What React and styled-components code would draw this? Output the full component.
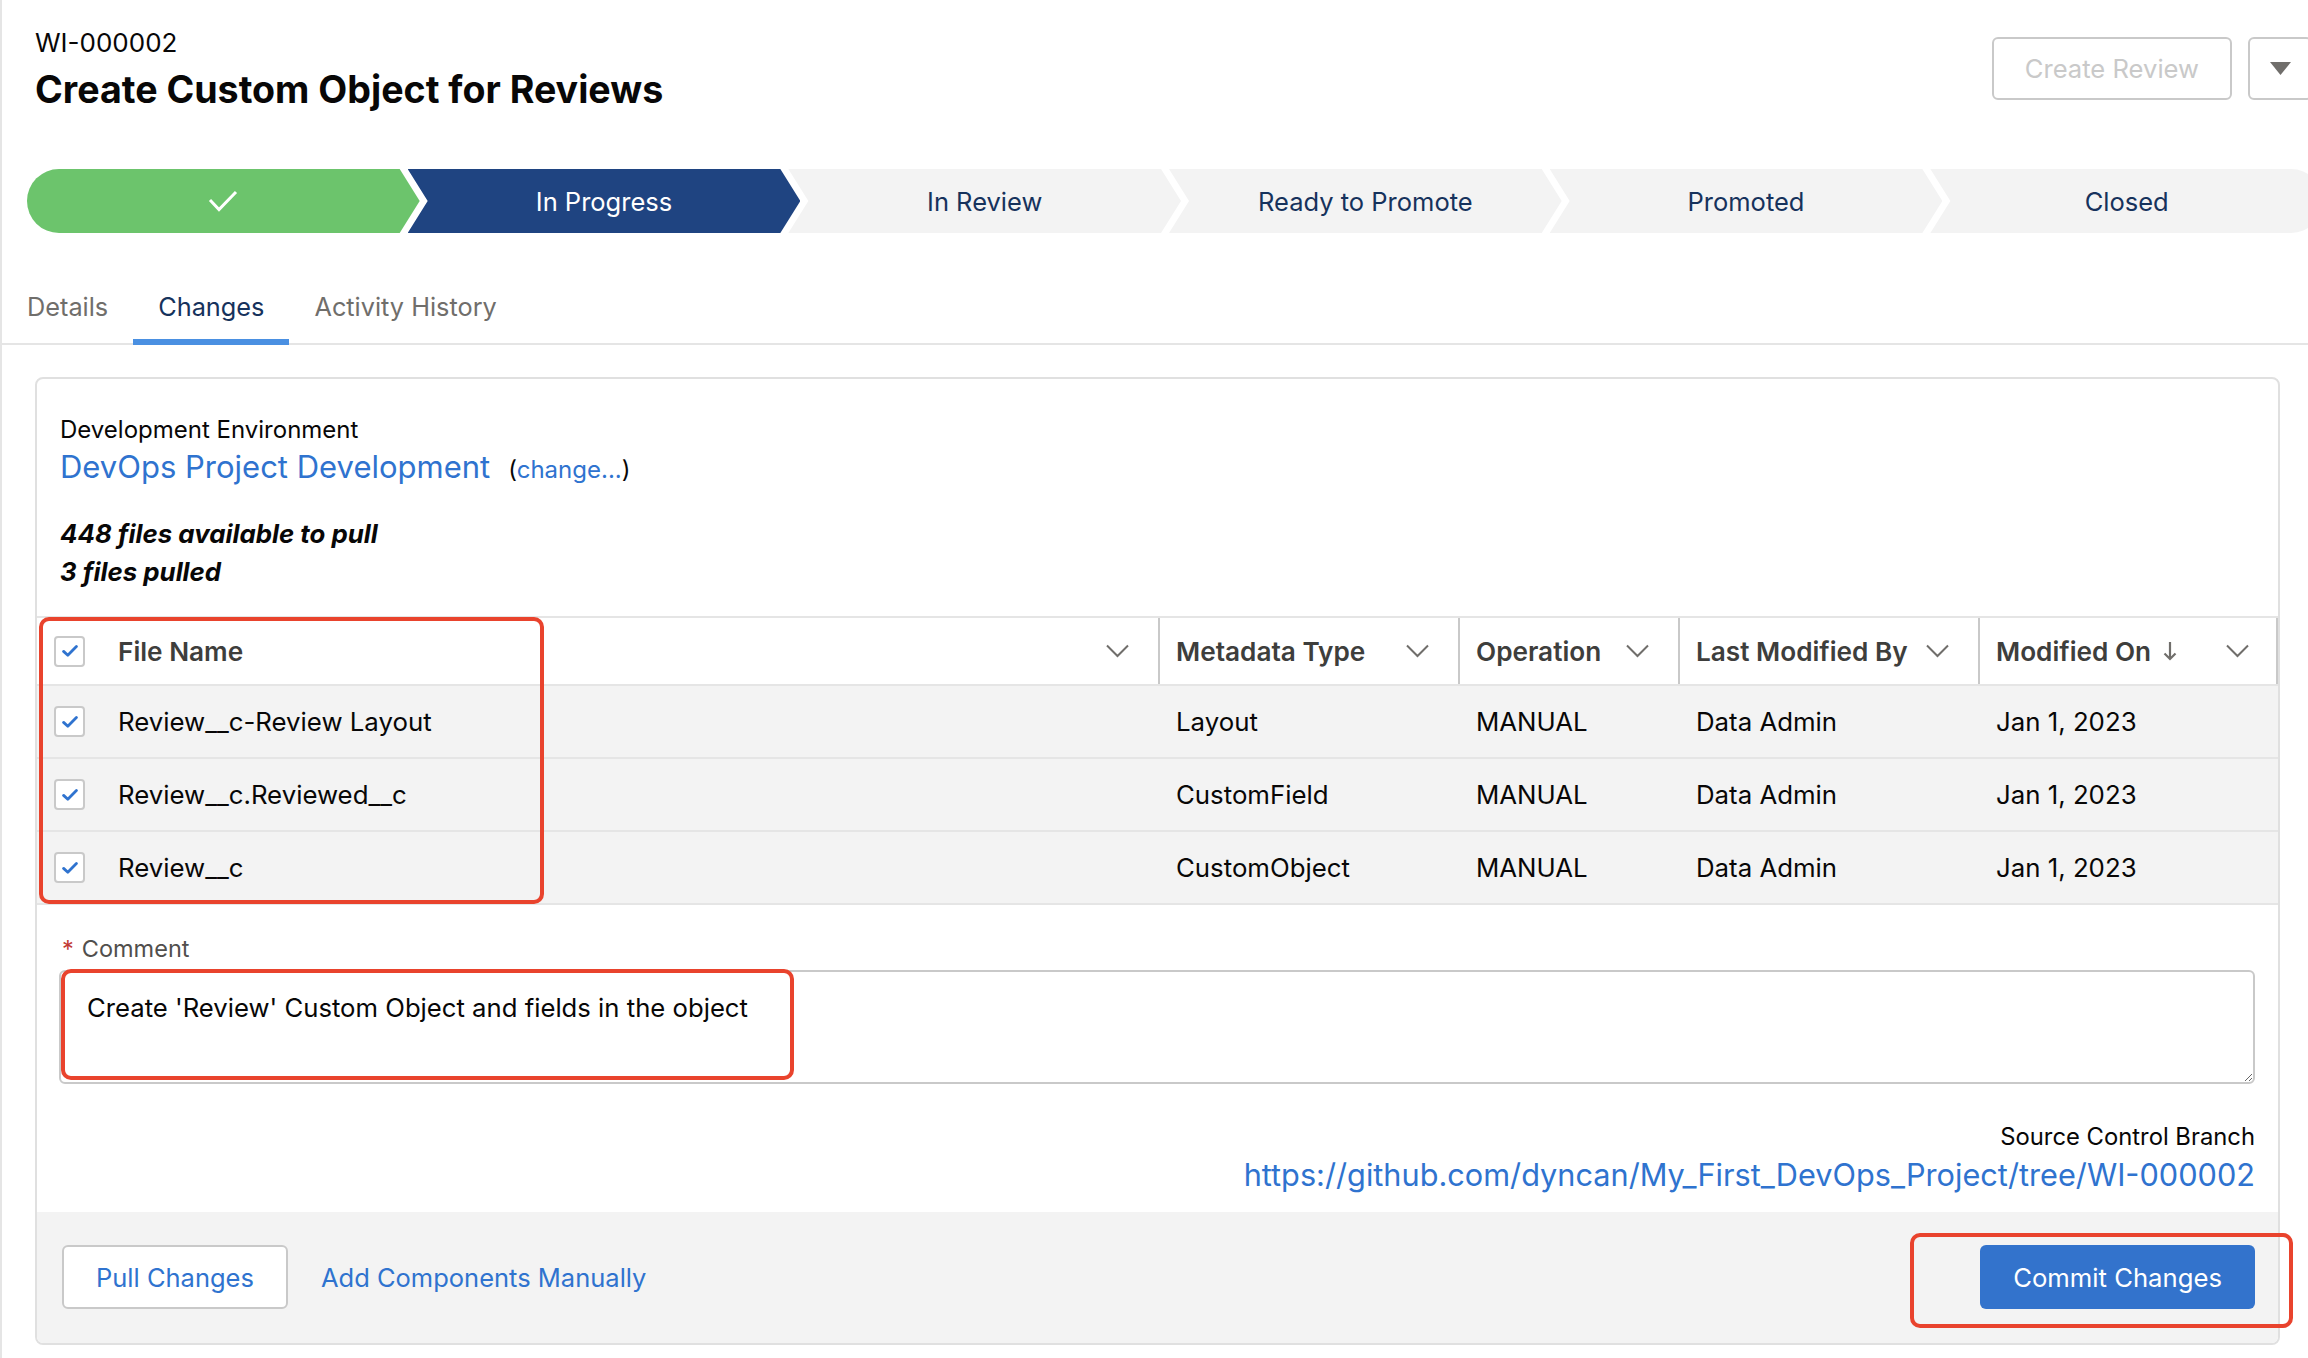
import React from "react";
import styled, { createGlobalStyle } from "styled-components";

const GlobalStyle = createGlobalStyle`
  *, *::before, *::after { box-sizing: border-box; }
  html, body { margin: 0; padding: 0; background: #fff; overflow: hidden; }
  body { font-family: Inter, "Liberation Sans", Arial, sans-serif; color: #080707; }
`;

const FONT = `Inter, "Liberation Sans", Arial, sans-serif`;

const Page = styled.div`
  position: relative;
  width: 2356px;
  min-height: 1358px;
  border-left: 2px solid #e5e5e5;
  font-family: ${FONT};
`;

const Header = styled.header`
  display: flex;
  justify-content: space-between;
  align-items: flex-start;
  padding: 26px 44px 0 33px;
`;

const TitleBlock = styled.div`
  display: flex;
  flex-direction: column;
`;

const RecordId = styled.div`
  font-size: 26px;
  line-height: 34px;
  color: #080707;
`;

const Title = styled.h1`
  margin: 6px 0 0;
  font-size: 37.6px;
  line-height: 48px;
  font-weight: 700;
  color: #080707;
`;

const Actions = styled.div`
  display: flex;
  gap: 16px;
  margin-top: 11px;
`;

const OutlineButton = styled.button`
  height: 63px;
  padding: 0 31px;
  border: 2px solid #c9c9c9;
  border-radius: 6px;
  background: #fff;
  color: ${p => (p.$muted ? "#c9c9c9" : "#2f73cf")};
  font-family: ${FONT};
  font-size: 25.6px;
  cursor: pointer;
`;

const MenuButton = styled.button`
  width: 64px;
  height: 63px;
  border: 2px solid #c9c9c9;
  border-radius: 6px;
  background: #fff;
  display: flex;
  align-items: center;
  justify-content: center;
  padding: 0;
`;

const PathBar = styled.div`
  display: flex;
  width: 2296px;
  height: 64px;
  margin: 55px 0 0 25px;
  border-radius: 32px;
  overflow: hidden;
`;

const stageBg = { complete: "#6cc46c", current: "#1f4481", incomplete: "#f3f3f3" };

const Stage = styled.div`
  flex: 1 1 0;
  height: 64px;
  margin-left: -12px;
  display: flex;
  align-items: center;
  justify-content: center;
  background: ${p => stageBg[p.$state]};
  color: ${p => (p.$state === "current" ? "#ffffff" : "#16325c")};
  font-size: 25.5px;
  clip-path: polygon(0 0, calc(100% - 20px) 0, 100% 50%, calc(100% - 20px) 100%, 0 100%, 20px 50%);
  &:first-child {
    margin-left: 0;
    clip-path: polygon(0 0, calc(100% - 20px) 0, 100% 50%, calc(100% - 20px) 100%, 0 100%);
  }
  &:last-child {
    clip-path: polygon(0 0, 100% 0, 100% 100%, 0 100%, 20px 50%);
  }
`;

const TabBar = styled.nav`
  display: flex;
  margin-top: 40px;
  border-bottom: 2px solid #e5e5e5;
`;

const Tab = styled.div`
  height: 72px;
  margin-bottom: -2px;
  padding: 0 25px;
  display: flex;
  align-items: center;
  font-size: 25.3px;
  color: ${p => (p.$active ? "#16325c" : "#706e6b")};
  border-bottom: 6px solid ${p => (p.$active ? "#4a90e2" : "transparent")};
`;

const Card = styled.section`
  margin: 32px 0 0 33px;
  width: 2245px;
  border: 2px solid #e0e0e0;
  border-radius: 8px;
  overflow: hidden;
  background: #fff;
`;

const EnvSection = styled.div`
  padding: 36px 24px 25px 23px;
`;

const EnvLabel = styled.div`
  font-size: 24px;
  line-height: 30px;
  color: #080707;
`;

const EnvLine = styled.div`
  display: flex;
  align-items: baseline;
  gap: 18px;
  margin-top: 3px;
  line-height: 38px;
`;

const EnvLink = styled.a`
  font-size: 31px;
  color: #2f73cf;
  text-decoration: none;
`;

const ChangeNote = styled.span`
  font-size: 24px;
  color: #080707;
`;

const InlineLink = styled.a`
  color: #2f73cf;
  text-decoration: none;
`;

const Stats = styled.div`
  margin-top: 26px;
  font-size: 25.8px;
  line-height: 38px;
  font-weight: 700;
  font-style: italic;
  color: #080707;
`;

const GRID = "1121px 300px 220px 300px 1fr";

const HeaderRow = styled.div`
  display: grid;
  grid-template-columns: ${GRID};
  height: 70px;
  border-top: 2px solid #e5e5e5;
  border-bottom: 2px solid #e5e5e5;
  background: #fff;
`;

const DataRow = styled.div`
  display: grid;
  grid-template-columns: ${GRID};
  height: 73px;
  border-bottom: 2px solid #e5e5e5;
  background: #f3f3f3;
`;

const HeadCell = styled.div`
  display: flex;
  align-items: center;
  padding: 0 27px 0 ${p => (p.$first ? "15px" : "16px")};
  border-left: 2px solid ${p => (p.$first ? "transparent" : "#c9c9c9")};
  border-right: 2px solid ${p => (p.$last ? "#c9c9c9" : "transparent")};
  font-size: 26.2px;
  font-weight: 600;
  color: #3e3e3c;
`;

const Cell = styled.div`
  display: flex;
  align-items: center;
  padding: 0 16px 0 ${p => (p.$first ? "15px" : "16px")};
  border-left: 2px solid transparent;
  font-size: 25.8px;
  color: #080707;
`;

const HeadLabel = styled.span`
  flex: 1;
  display: flex;
  align-items: center;
  gap: 12px;
`;

const CheckWrap = styled.span`
  width: 31px;
  height: 31px;
  margin-right: 33px;
  flex: none;
  border: 2px solid #c9c9c9;
  border-radius: 4px;
  background: #fff;
  display: flex;
  align-items: center;
  justify-content: center;
`;

const CommentSection = styled.div`
  padding: 30px 23px 0 22px;
`;

const FieldLabel = styled.label`
  display: block;
  font-size: 23.5px;
  line-height: 28px;
  color: #514f4d;
  margin-left: 3px;
`;

const Required = styled.abbr`
  color: #c23934;
  text-decoration: none;
  margin-right: 8px;
`;

const CommentBox = styled.textarea`
  display: block;
  width: 100%;
  height: 114px;
  margin-top: 7px;
  padding: 20px 26px;
  border: 2px solid #c9c9c9;
  border-radius: 6px;
  font-family: ${FONT};
  font-size: 25.7px;
  line-height: 32px;
  color: #080707;
  resize: vertical;
  outline: none;
`;

const BranchSection = styled.div`
  padding: 38px 23px 17px;
  text-align: right;
`;

const BranchLabel = styled.div`
  font-size: 23.8px;
  line-height: 30px;
  color: #080707;
`;

const BranchLink = styled.a`
  display: block;
  margin-top: 3px;
  font-size: 30.7px;
  line-height: 40px;
  color: #2f73cf;
  text-decoration: none;
`;

const Footer = styled.footer`
  display: flex;
  align-items: center;
  padding: 33px 23px 34px 25px;
  background: #f3f3f3;
`;

const NeutralButton = styled.button`
  height: 64px;
  padding: 0 32px;
  border: 2px solid #c9c9c9;
  border-radius: 6px;
  background: #fff;
  color: #2f73cf;
  font-family: ${FONT};
  font-size: 25.5px;
`;

const TextButton = styled.a`
  margin-left: 33px;
  font-size: 25.5px;
  color: #2f73cf;
  text-decoration: none;
`;

const BrandButton = styled.button`
  margin-left: auto;
  height: 64px;
  padding: 0 33px;
  border: none;
  border-radius: 6px;
  background: #3373cc;
  color: #fff;
  font-family: ${FONT};
  font-size: 25.7px;
`;

const Annotation = styled.div`
  position: absolute;
  left: ${p => p.$x}px;
  top: ${p => p.$y}px;
  width: ${p => p.$w}px;
  height: ${p => p.$h}px;
  border: 4px solid #e9432d;
  border-radius: 10px;
  pointer-events: none;
`;

const CheckIcon = () => (
  <svg width="16" height="12" viewBox="0 0 16 12" aria-hidden="true">
    <path d="M1.6 6.4 L5.8 10.2 L14.4 1.6" fill="none" stroke="#2f73cf" strokeWidth="2.8" strokeLinecap="round" strokeLinejoin="round" />
  </svg>
);

const Checkbox = () => (
  <CheckWrap>
    <CheckIcon />
  </CheckWrap>
);

const Chevron = () => (
  <svg width="23" height="14" viewBox="0 0 23 14" aria-hidden="true">
    <polyline points="1,1.5 11.5,12 22,1.5" fill="none" stroke="#706e6b" strokeWidth="2" />
  </svg>
);

const SortArrow = () => (
  <svg width="14" height="20" viewBox="0 0 14 20" aria-hidden="true">
    <path d="M7 1 V18 M1.5 12.5 L7 18 L12.5 12.5" fill="none" stroke="#706e6b" strokeWidth="2.2" />
  </svg>
);

const Triangle = () => (
  <svg width="21" height="13" viewBox="0 0 21 13" aria-hidden="true">
    <polygon points="0,0 21,0 10.5,13" fill="#706e6b" />
  </svg>
);

const DoneCheck = () => (
  <svg width="30" height="22" viewBox="0 0 30 22" aria-hidden="true">
    <path d="M2 10 L11 19.5 L28 2" fill="none" stroke="#fff" strokeWidth="3" />
  </svg>
);

const stages = [
  { key: "done", state: "complete" },
  { key: "In Progress", state: "current" },
  { key: "In Review", state: "incomplete" },
  { key: "Ready to Promote", state: "incomplete" },
  { key: "Promoted", state: "incomplete" },
  { key: "Closed", state: "incomplete" },
];

const columns = ["Metadata Type", "Operation", "Last Modified By", "Modified On"];

const rows = [
  ["Review__c-Review Layout", "Layout", "MANUAL", "Data Admin", "Jan 1, 2023"],
  ["Review__c.Reviewed__c", "CustomField", "MANUAL", "Data Admin", "Jan 1, 2023"],
  ["Review__c", "CustomObject", "MANUAL", "Data Admin", "Jan 1, 2023"],
];

export default function App() {
  return (
    <>
      <GlobalStyle />
      <Page>
        <Header>
          <TitleBlock>
            <RecordId>WI-000002</RecordId>
            <Title>Create Custom Object for Reviews</Title>
          </TitleBlock>
          <Actions>
            <OutlineButton $muted disabled>Create Review</OutlineButton>
            <MenuButton aria-label="More actions"><Triangle /></MenuButton>
          </Actions>
        </Header>

        <PathBar>
          {stages.map(s => (
            <Stage key={s.key} $state={s.state}>
              {s.state === "complete" ? <DoneCheck /> : s.key}
            </Stage>
          ))}
        </PathBar>

        <TabBar>
          <Tab>Details</Tab>
          <Tab $active>Changes</Tab>
          <Tab>Activity History</Tab>
        </TabBar>

        <Card>
          <EnvSection>
            <EnvLabel>Development Environment</EnvLabel>
            <EnvLine>
              <EnvLink href="#">DevOps Project Development</EnvLink>
              <ChangeNote>(<InlineLink href="#">change...</InlineLink>)</ChangeNote>
            </EnvLine>
            <Stats>
              448 files available to pull
              <br />
              3 files pulled
            </Stats>
          </EnvSection>

          <div>
            <HeaderRow>
              <HeadCell $first>
                <Checkbox />
                <HeadLabel>File Name</HeadLabel>
                <Chevron />
              </HeadCell>
              {columns.map((c, i) => (
                <HeadCell key={c} $last={i === columns.length - 1}>
                  <HeadLabel>
                    {c}
                    {c === "Modified On" && <SortArrow />}
                  </HeadLabel>
                  <Chevron />
                </HeadCell>
              ))}
            </HeaderRow>
            {rows.map(r => (
              <DataRow key={r[0]}>
                <Cell $first>
                  <Checkbox />
                  {r[0]}
                </Cell>
                {r.slice(1).map((v, i) => (
                  <Cell key={i}>{v}</Cell>
                ))}
              </DataRow>
            ))}
          </div>

          <CommentSection>
            <FieldLabel>
              <Required title="required">*</Required>Comment
            </FieldLabel>
            <CommentBox readOnly defaultValue="Create 'Review' Custom Object and fields in the object" />
          </CommentSection>

          <BranchSection>
            <BranchLabel>Source Control Branch</BranchLabel>
            <BranchLink href="#">https://github.com/dyncan/My_First_DevOps_Project/tree/WI-000002</BranchLink>
          </BranchSection>

          <Footer>
            <NeutralButton>Pull Changes</NeutralButton>
            <TextButton href="#">Add Components Manually</TextButton>
            <BrandButton>Commit Changes</BrandButton>
          </Footer>
        </Card>

        <Annotation $x={37} $y={617} $w={505} $h={287} />
        <Annotation $x={59} $y={969} $w={733} $h={111} />
        <Annotation $x={1908} $y={1233} $w={383} $h={95} />
      </Page>
    </>
  );
}
